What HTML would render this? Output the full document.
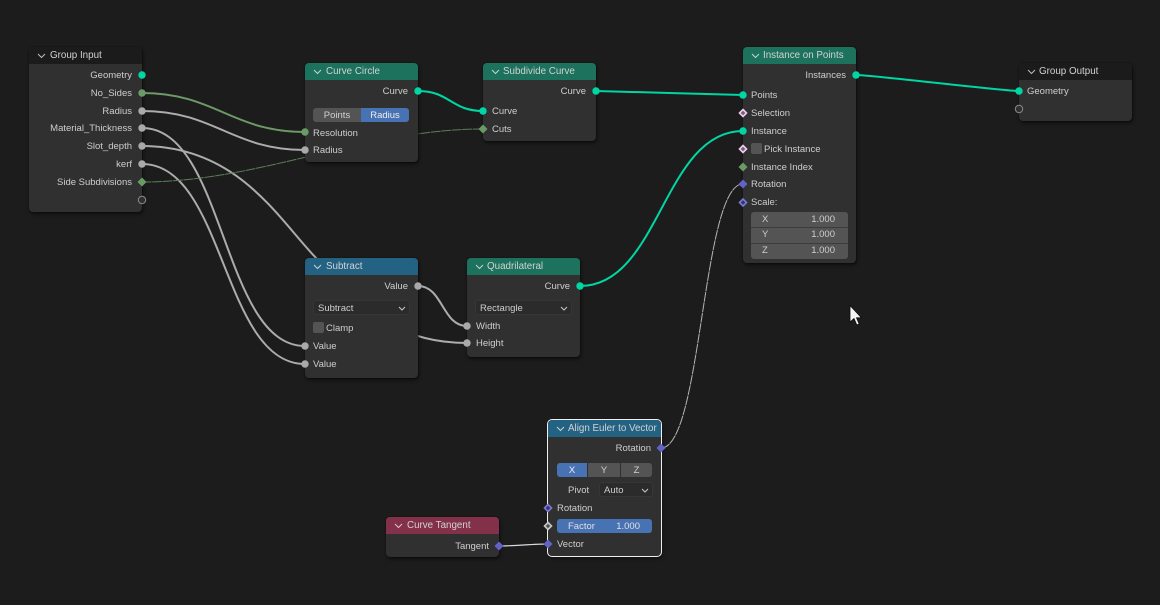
<!DOCTYPE html>
<html>
<head>
<meta charset="utf-8">
<style>
html,body{margin:0;padding:0;width:1160px;height:605px;overflow:hidden;background:#1c1c1c;}
body{position:relative;font-family:"Liberation Sans",sans-serif;font-size:9.5px;color:#cecece;}
svg.l{position:absolute;left:0;top:0;}
.n{position:absolute;width:113px;background:#303030;border-radius:4px;box-shadow:0 0 1px rgba(0,0,0,.7),1px 2px 3px rgba(0,0,0,.55);}
.h{position:absolute;left:0;top:0;right:0;height:17px;border-radius:4px 4px 0 0;}
.h b{position:absolute;left:21px;top:0;line-height:17px;font-size:9.8px;font-weight:normal;color:#d2d2d2;white-space:nowrap;}
.h svg{position:absolute;left:8px;top:6px;}
.t{position:absolute;line-height:14px;margin-top:1px;white-space:nowrap;}
.r{right:10px;text-align:right;}
.b{position:absolute;text-align:center;line-height:15px;height:14px;background:#545454;color:#d2d2d2;}
.s{position:absolute;height:15px;line-height:14px;box-sizing:border-box;border:1px solid #363636;background:#2b2b2b;border-radius:3px;padding-left:4px;color:#cecece;}
.s svg{position:absolute;right:3px;top:5px;}
.c{position:absolute;width:11px;height:11px;background:#545454;border-radius:2px;}
</style>
</head>
<body>
<svg class="l" width="1160" height="605" fill="none" stroke-linecap="round">
<path d="M142 93C215 93 232 132 305 132" stroke="#6d9a68" stroke-width="2"/>
<path d="M142 111C215 111 232 150 305 150" stroke="#acacac" stroke-width="2"/>
<path d="M142 128C225 128 222 346 305 346" stroke="#acacac" stroke-width="2"/>
<path d="M142 164C225 164 222 364 305 364" stroke="#acacac" stroke-width="2"/>
<path d="M142 146C240 146 280 222 318 260C360 302 390 343 467 343" stroke="#acacac" stroke-width="2"/>
<path d="M142 182C260 182 365 129 483 129" stroke="#5d7d5a" stroke-width="1" stroke-dasharray="9 1.5"/>
<path d="M418 91C450 91 451 111 483 111" stroke="#00d6a3" stroke-width="2"/>
<path d="M596 91C612 91 727 95 743 95" stroke="#00d6a3" stroke-width="2"/>
<path d="M580 286C660 286 663 131 743 131" stroke="#00d6a3" stroke-width="2"/>
<path d="M856 75C872 75 1003 91 1019 91" stroke="#00d6a3" stroke-width="2"/>
<path d="M418 286C443 286 442 326 467 326" stroke="#acacac" stroke-width="2"/>
<path d="M661 448C702 448 702 184 743 184" stroke="#b4b4bc" stroke-width="1" stroke-dasharray="9 1.5"/>
<path d="M499 546C515 546 532 544 548 544" stroke="#d8d8e0" stroke-width="1.2"/>
</svg>

<div class="n" style="left:29px;top:47px;height:165px;">
<div class="h" style="background:#1b1b1b;"><svg width="10" height="6"><path d="M1 1L4.500 4.500L8 1" fill="none" stroke="#bcbcbc"/></svg><b>Group Input</b></div>
<span class="t r" style="top:21px;">Geometry</span>
<span class="t r" style="top:39px;">No_Sides</span>
<span class="t r" style="top:57px;">Radius</span>
<span class="t r" style="top:74px;">Material_Thickness</span>
<span class="t r" style="top:92px;">Slot_depth</span>
<span class="t r" style="top:110px;">kerf</span>
<span class="t r" style="top:128px;">Side Subdivisions</span>
</div>

<div class="n" style="left:305px;top:63px;height:99px;">
<div class="h" style="background:#1c725d;"><svg width="10" height="6"><path d="M1 1L4.500 4.500L8 1" fill="none" stroke="#c4d4cc"/></svg><b>Curve Circle</b></div>
<span class="t r" style="top:21px;">Curve</span>
<div class="b" style="left:8px;top:45px;width:48px;border-radius:3px 0 0 3px;">Points</div>
<div class="b" style="left:56px;top:45px;width:48px;border-radius:0 3px 3px 0;background:#4772b3;color:#eee;">Radius</div>
<span class="t" style="left:8px;top:63px;">Resolution</span>
<span class="t" style="left:8px;top:80px;">Radius</span>
</div>

<div class="n" style="left:483px;top:63px;height:78px;">
<div class="h" style="background:#1c725d;"><svg width="10" height="6"><path d="M1 1L4.500 4.500L8 1" fill="none" stroke="#c4d4cc"/></svg><b style="left:20px;">Subdivide Curve</b></div>
<span class="t r" style="top:21px;">Curve</span>
<span class="t" style="left:9px;top:41px;">Curve</span>
<span class="t" style="left:9px;top:59px;">Cuts</span>
</div>

<div class="n" style="left:743px;top:47px;height:216px;">
<div class="h" style="background:#1c725d;"><svg width="10" height="6"><path d="M1 1L4.500 4.500L8 1" fill="none" stroke="#c4d4cc"/></svg><b style="left:20px;">Instance on Points</b></div>
<span class="t r" style="top:21px;">Instances</span>
<span class="t" style="left:8px;top:41px;">Points</span>
<span class="t" style="left:8px;top:59px;">Selection</span>
<span class="t" style="left:8px;top:77px;">Instance</span>
<div class="c" style="left:8px;top:96px;"></div>
<span class="t" style="left:21px;top:95px;">Pick Instance</span>
<span class="t" style="left:8px;top:113px;">Instance Index</span>
<span class="t" style="left:8px;top:130px;">Rotation</span>
<span class="t" style="left:8px;top:148px;">Scale:</span>
<div style="position:absolute;left:8px;top:165px;width:97px;height:47px;background:#545454;border-radius:3px;">
<span class="t" style="left:11px;top:0;">X</span><span class="t" style="right:13px;top:0;">1.000</span>
<span class="t" style="left:11px;top:15px;">Y</span><span class="t" style="right:13px;top:15px;">1.000</span>
<span class="t" style="left:11px;top:31px;">Z</span><span class="t" style="right:13px;top:31px;">1.000</span>
<div style="position:absolute;left:0;right:0;top:15px;height:1px;background:#3c3c3c;"></div>
<div style="position:absolute;left:0;right:0;top:31px;height:1px;background:#3c3c3c;"></div>
</div>
</div>

<div class="n" style="left:1019px;top:63px;height:58px;">
<div class="h" style="background:#1b1b1b;"><svg width="10" height="6"><path d="M1 1L4.500 4.500L8 1" fill="none" stroke="#bcbcbc"/></svg><b style="left:20px;">Group Output</b></div>
<span class="t" style="left:8px;top:21px;">Geometry</span>
</div>

<div class="n" style="left:305px;top:258px;height:120px;">
<div class="h" style="background:#246283;"><svg width="10" height="6"><path d="M1 1L4.500 4.500L8 1" fill="none" stroke="#c4d4dc"/></svg><b>Subtract</b></div>
<span class="t r" style="top:21px;">Value</span>
<div class="s" style="left:8px;top:42px;width:97px;line-height:15px;">Subtract<svg width="8" height="5"><path d="M1 1L4 4L7 1" fill="none" stroke="#c8c8c8"/></svg></div>
<div class="c" style="left:8px;top:64px;"></div>
<span class="t" style="left:21px;top:63px;">Clamp</span>
<span class="t" style="left:8px;top:81px;">Value</span>
<span class="t" style="left:8px;top:99px;">Value</span>
</div>

<div class="n" style="left:467px;top:258px;height:99px;">
<div class="h" style="background:#1c725d;"><svg width="10" height="6"><path d="M1 1L4.500 4.500L8 1" fill="none" stroke="#c4d4cc"/></svg><b style="left:20px;">Quadrilateral</b></div>
<span class="t r" style="top:21px;">Curve</span>
<div class="s" style="left:8px;top:42px;width:97px;line-height:15px;">Rectangle<svg width="8" height="5"><path d="M1 1L4 4L7 1" fill="none" stroke="#c8c8c8"/></svg></div>
<span class="t" style="left:9px;top:61px;">Width</span>
<span class="t" style="left:9px;top:78px;">Height</span>
</div>

<div class="n" style="left:386px;top:517px;height:40px;">
<div class="h" style="background:#83314a;"><svg width="10" height="6"><path d="M1 1L4.500 4.500L8 1" fill="none" stroke="#dcc4cc"/></svg><b>Curve Tangent</b></div>
<span class="t r" style="top:22px;">Tangent</span>
</div>

<div class="n" style="left:548px;top:420px;height:136px;box-shadow:0 0 0 1px #f0f0f0,1px 2px 3px rgba(0,0,0,.55);">
<div class="h" style="background:#246283;"><svg width="10" height="6"><path d="M1 1L4.500 4.500L8 1" fill="none" stroke="#c4d4dc"/></svg><b style="left:20px;">Align Euler to Vector</b></div>
<span class="t r" style="top:21px;">Rotation</span>
<div class="b" style="left:9px;top:43px;width:30px;border-radius:3px 0 0 3px;background:#4772b3;color:#eee;">X</div>
<div class="b" style="left:40px;top:43px;width:32px;">Y</div>
<div class="b" style="left:73px;top:43px;width:31px;border-radius:0 3px 3px 0;">Z</div>
<span class="t" style="left:20px;top:63px;">Pivot</span>
<div class="s" style="left:51px;top:62px;width:54px;line-height:15px;">Auto<svg width="8" height="5"><path d="M1 1L4 4L7 1" fill="none" stroke="#c8c8c8"/></svg></div>
<span class="t" style="left:9px;top:81px;">Rotation</span>
<div class="b" style="left:9px;top:99px;width:95px;border-radius:3px;background:#4772b3;"></div>
<span class="t" style="left:20px;top:99px;color:#e0e0e0;">Factor</span>
<span class="t" style="right:21px;top:99px;color:#e0e0e0;">1.000</span>
<span class="t" style="left:9px;top:117px;">Vector</span>
</div>

<svg class="l" width="1160" height="605">
<defs>
<circle id="dot" r="3.7"/>
<path id="dia" d="M0 -4.500L4.500 0L0 4.500L-4.500 0Z"/>
</defs>
<g fill="#00d6a3">
<use href="#dot" x="142" y="75"/><use href="#dot" x="418" y="91"/><use href="#dot" x="483" y="111"/><use href="#dot" x="596" y="91"/>
<use href="#dot" x="743" y="95"/><use href="#dot" x="743" y="131"/><use href="#dot" x="856" y="75"/><use href="#dot" x="1019" y="91"/><use href="#dot" x="580" y="286"/>
</g>
<g fill="#6a9a66">
<use href="#dot" x="142" y="93"/><use href="#dot" x="305" y="132"/>
<use href="#dia" x="142" y="182"/><use href="#dia" x="483" y="129"/><use href="#dia" x="743" y="167"/>
</g>
<g fill="#a9a9a9">
<use href="#dot" x="142" y="111"/><use href="#dot" x="142" y="128"/><use href="#dot" x="142" y="146"/><use href="#dot" x="142" y="164"/>
<use href="#dot" x="305" y="150"/><use href="#dot" x="305" y="346"/><use href="#dot" x="305" y="364"/><use href="#dot" x="418" y="286"/>
<use href="#dot" x="467" y="326"/><use href="#dot" x="467" y="343"/>
</g>
<circle cx="142" cy="200" r="3.7" fill="#303030" stroke="#8a8a8a"/>
<circle cx="1019" cy="109" r="3.7" fill="#303030" stroke="#8a8a8a"/>
<g fill="#6363c7">
<use href="#dia" x="743" y="184"/><use href="#dia" x="661" y="448"/><use href="#dia" x="499" y="546"/><use href="#dia" x="548" y="544"/>
</g>
<g stroke-width="1.6">
<path d="M743 199L746.500 202.500L743 206L739.500 202.500Z" fill="#33337a" stroke="#7a7ad0"/>
<path d="M548 504.500L551.500 508L548 511.500L544.500 508Z" fill="#33337a" stroke="#7a7ad0"/>
<path d="M743 109.500L746.500 113L743 116.500L739.500 113Z" fill="#7a5a7a" stroke="#eccdec"/>
<path d="M743 145.500L746.500 149L743 152.500L739.500 149Z" fill="#7a5a7a" stroke="#eccdec"/>
<path d="M548 522.500L551.500 526L548 529.500L544.500 526Z" fill="#555" stroke="#c8c8c8"/>
</g>
<path d="M850 305.500V322L854 318.500L856.800 325L859.200 324L856.500 317.800H861.500Z" fill="#f4f4f4" stroke="#0c0c0c" stroke-width=".8"/>
</svg>
</body>
</html>
